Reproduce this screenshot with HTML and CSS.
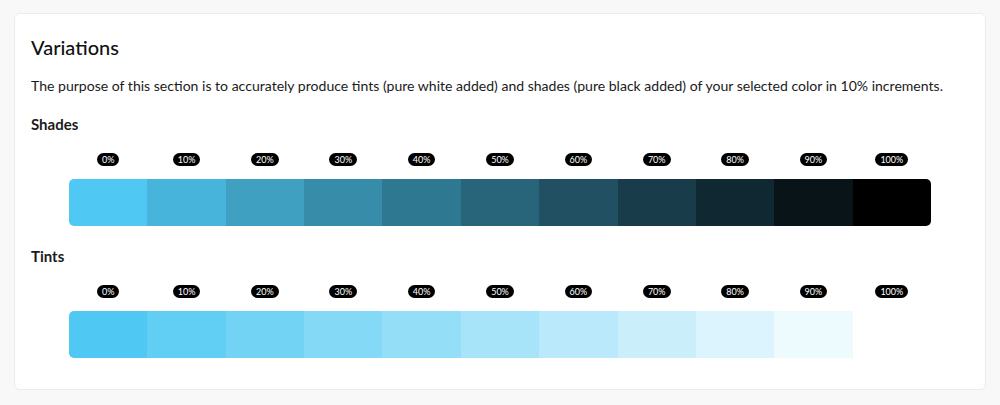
FILE: index.html
```html
<!DOCTYPE html>
<html lang="en">
<head>
<meta charset="utf-8">
<title>Variations</title>
<link rel="stylesheet" href="styles.css">
</head>
<body>
<section class="card">
  <h2 class="title">Variations</h2>
  <p class="desc">The purpose of this section is to accurately produce tints (pure white added) and shades (pure black added) of your selected color in 10% increments.</p>

  <h3 class="sub">Shades</h3>
  <div class="scale">
    <div class="labels">
      <span class="pill">0%</span><span class="pill">10%</span><span class="pill">20%</span><span class="pill">30%</span><span class="pill">40%</span><span class="pill">50%</span><span class="pill">60%</span><span class="pill">70%</span><span class="pill">80%</span><span class="pill">90%</span><span class="pill">100%</span>
    </div>
    <div class="bar">
      <div class="sw s0"></div><div class="sw s1"></div><div class="sw s2"></div><div class="sw s3"></div><div class="sw s4"></div><div class="sw s5"></div><div class="sw s6"></div><div class="sw s7"></div><div class="sw s8"></div><div class="sw s9"></div><div class="sw s10"></div>
    </div>
  </div>

  <h3 class="sub tints-title">Tints</h3>
  <div class="scale">
    <div class="labels">
      <span class="pill">0%</span><span class="pill">10%</span><span class="pill">20%</span><span class="pill">30%</span><span class="pill">40%</span><span class="pill">50%</span><span class="pill">60%</span><span class="pill">70%</span><span class="pill">80%</span><span class="pill">90%</span><span class="pill">100%</span>
    </div>
    <div class="bar">
      <div class="sw t0"></div><div class="sw t1"></div><div class="sw t2"></div><div class="sw t3"></div><div class="sw t4"></div><div class="sw t5"></div><div class="sw t6"></div><div class="sw t7"></div><div class="sw t8"></div><div class="sw t9"></div><div class="sw t10"></div>
    </div>
  </div>
</section>
</body>
</html>
```
FILE: styles.css
```css
* { box-sizing: border-box; }
html, body { margin: 0; }
body {
  background: #f8f8f8;
  padding: 13px 14px;
  font-family: "Lato", "Noto Sans", "Liberation Sans", sans-serif;
  color: #1b1b1b;
}
.card {
  background: #fff;
  border: 1px solid #ebebeb;
  border-radius: 6px;
  padding: 17px 16px 32px;
  height: 377px;
}
.title {
  margin: 2px 0 0;
  font-size: 20px;
  line-height: 28px;
  font-weight: 500;
  color: #111;
}
.desc {
  margin: 15px 0 0;
  font-size: 14.06px;
  line-height: 20px;
  white-space: nowrap;
}
.sub {
  margin: 18px 0 0;
  font-size: 15px;
  line-height: 20px;
  font-weight: 700;
}
.tints-title { margin-top: 20px; }
.scale {
  width: 862px;
  margin: 0 auto;
}
.labels {
  display: grid;
  grid-template-columns: repeat(11, 1fr);
  justify-items: center;
  margin-top: 19px;
}
.pill {
  background: #000;
  color: #fff;
  font-size: 9px;
  height: 13px;
  line-height: 13px;
  padding: 0 5px;
  border-radius: 7px;
}
.bar {
  display: grid;
  grid-template-columns: repeat(11, 1fr);
  height: 47px;
  margin-top: 13px;
  border-radius: 5px;
  overflow: hidden;
}
.s0 { background: #4fc8f3; }
.s1 { background: #47b4db; }
.s2 { background: #3fa0c2; }
.s3 { background: #378caa; }
.s4 { background: #2f7892; }
.s5 { background: #28647a; }
.s6 { background: #205061; }
.s7 { background: #183c49; }
.s8 { background: #102831; }
.s9 { background: #081418; }
.s10 { background: #000; }
.t0 { background: #4fc8f3; }
.t1 { background: #61cef4; }
.t2 { background: #72d3f5; }
.t3 { background: #84d9f7; }
.t4 { background: #95def8; }
.t5 { background: #a7e4f9; }
.t6 { background: #b9e9fa; }
.t7 { background: #caeffb; }
.t8 { background: #dcf4fd; }
.t9 { background: #edfafe; }
.t10 { background: #fff; }
```
